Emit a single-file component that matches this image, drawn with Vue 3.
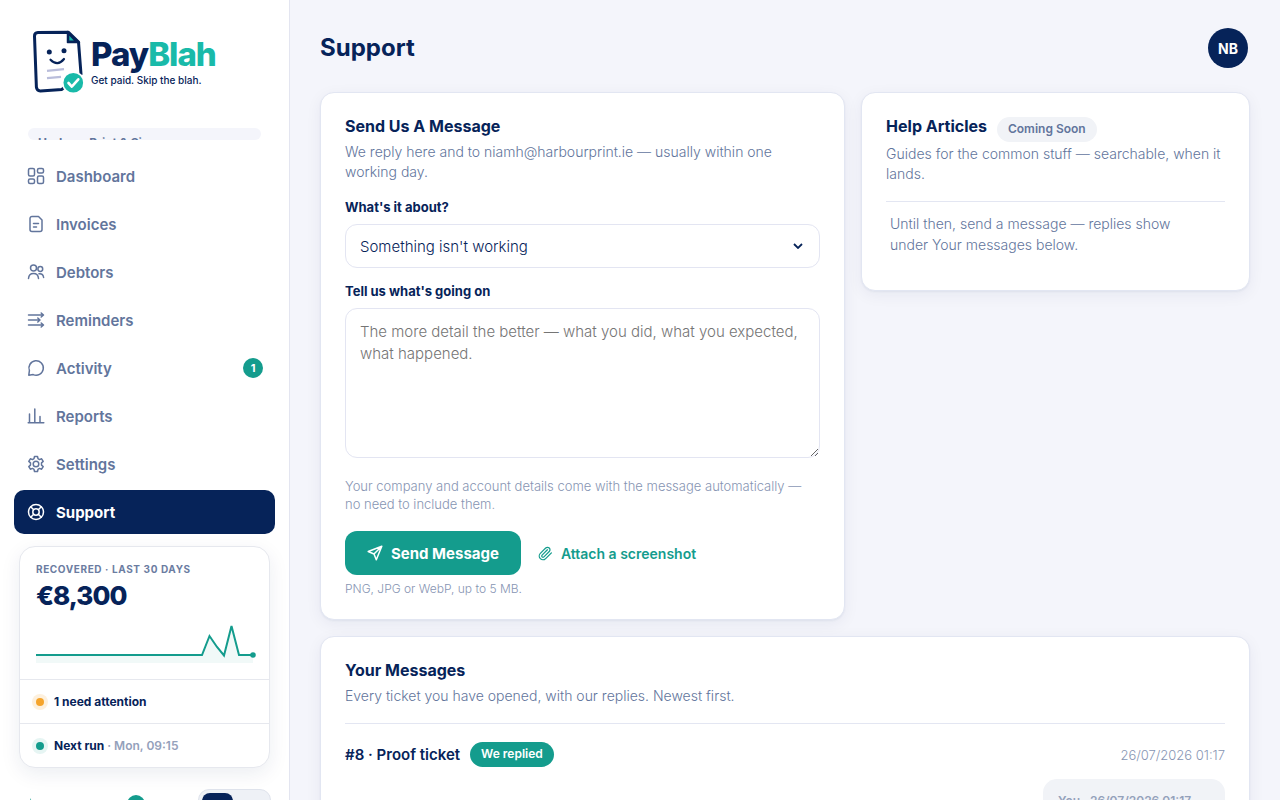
<script setup>
import { ref } from 'vue'

const nav = [
  { label: 'Dashboard', icon: 'dashboard' },
  { label: 'Invoices', icon: 'invoices' },
  { label: 'Debtors', icon: 'debtors' },
  { label: 'Reminders', icon: 'reminders' },
  { label: 'Activity', icon: 'activity', count: 1 },
  { label: 'Reports', icon: 'reports' },
  { label: 'Settings', icon: 'settings' },
  { label: 'Support', icon: 'support', active: true },
]

const icons = {
  dashboard:
    '<rect x="1.5" y="1.5" width="6" height="7.5" rx="1.5"/><rect x="10.5" y="1.5" width="6" height="4.5" rx="1.5"/><rect x="1.5" y="12" width="6" height="4.5" rx="1.5"/><rect x="10.5" y="9" width="6" height="7.5" rx="1.5"/>',
  invoices:
    '<path d="M5 1.5h6.500l3.500 3.500V14.500a2 2 0 0 1-2 2H5a2 2 0 0 1-2-2v-11a2 2 0 0 1 2-2z"/><path d="M6.500 8.500h5M6.500 12h3"/>',
  debtors:
    '<circle cx="6.500" cy="5" r="3"/><circle cx="13.300" cy="6" r="2.400"/><path d="M1.500 15.500c.2-3.200 2.200-5 5-5s4.800 1.800 5 5M12 10.800c2.600-.3 4.300 1.200 4.600 3.700"/>',
  reminders:
    '<path d="M1.500 4h14.500M1.500 9h11M1.500 14h14.500M14.200 2l2.300 2-2.300 2M10.800 7l2.200 2-2.200 2M14.200 12l2.300 2-2.300 2"/>',
  activity: '<path d="M1.800 16.200l.6-4.600A7.200 7.200 0 1 1 6.200 15.600z"/>',
  reports: '<path d="M1.200 15.800h15.600M2.500 15.500V7M7.800 15.500V2M13 15.500V9.500"/>',
  settings:
    '<circle cx="9" cy="9" r="2.800"/><path d="M7.500 1.500h3l.5 2.200 1.500.9 2.100-.8 1.600 2.600-1.700 1.500v2.200l1.700 1.500-1.600 2.600-2.100-.8-1.500.9-.5 2.200h-3L7 14.300l-1.500-.9-2.100.8-1.600-2.600 1.700-1.500V7.900L1.800 6.400l1.600-2.600 2.100.8L7 3.700z"/>',
  support:
    '<circle cx="9" cy="9" r="7.500"/><circle cx="9" cy="9" r="3.200"/><path d="M3.700 3.700l3 3M14.300 3.700l-3 3M3.700 14.300l3-3M14.300 14.300l-3-3"/>',
}

const topic = ref("Something isn't working")
const topics = ["Something isn't working", 'A billing question', 'An idea or request', 'Something else']
const message = ref('')
</script>

<template>
  <div class="shell">
    <aside class="sidebar">
      <a class="brand" href="#" aria-label="PayBlah home">
        <svg class="mark" width="56" height="66" viewBox="32 29 56 66" fill="none">
          <path d="M68.500 32.200 38 32.600q-3.600.2-3.500 3.600l1.900 51q.4 3.800 4 3.700l21.500-1.500L81 74l-2.500-32z" fill="#fff" stroke="#062359" stroke-width="3" stroke-linejoin="round" />
          <path d="M67.500 31.500v11h12z" fill="#062359" stroke="#062359" stroke-width="1.500" stroke-linejoin="round" />
          <path d="M69.300 35.800v4.700h4.500z" fill="#19baa9" />
          <circle cx="49.300" cy="52" r="2.500" fill="#062359" />
          <circle cx="64" cy="50.800" r="2.500" fill="#062359" />
          <path d="M50.500 59.700q7 7.200 13.500-.7" stroke="#062359" stroke-width="2.200" stroke-linecap="round" />
          <path d="m47 70.800 17-1.600M47 78.200l14-1.300" stroke="#b9bddb" stroke-width="2.200" />
          <circle cx="73.300" cy="82.700" r="11.500" fill="#fff" />
          <circle cx="73.300" cy="82.700" r="9.800" fill="#19baa9" />
          <path d="m68.500 83 3.300 3.600 6.500-7.300" stroke="#fff" stroke-width="2.600" stroke-linecap="round" stroke-linejoin="round" />
        </svg>
        <span class="words">
          <span class="name">Pay<span class="teal">Blah</span></span>
          <span class="tagline">Get paid. Skip the blah.</span>
        </span>
      </a>

      <div class="company">Harbour Print &amp; Signs</div>

      <nav class="nav" aria-label="Main">
        <a v-for="item in nav" :key="item.label" href="#" class="nav-item" :class="{ active: item.active }">
          <svg width="18" height="18" viewBox="0 0 18 18" class="line-icon" v-html="icons[item.icon]"></svg>
          <span class="nav-label">{{ item.label }}</span>
          <span v-if="item.count" class="count">{{ item.count }}</span>
        </a>
      </nav>

      <section class="pulse">
        <div class="pulse-top">
          <div class="eyebrow">RECOVERED · LAST 30 DAYS</div>
          <div class="amount">€8,300</div>
          <svg class="spark" viewBox="0 0 217 44" height="44">
            <path d="M0 35H166L173.500 16 181 27 188 35.500 195.500 6 203 35H217V43H0z" fill="#149c8d" fill-opacity=".06" />
            <path d="M0 35H166L173.500 16 181 27 188 35.500 195.500 6 203 35H217" fill="none" stroke="#149c8d" stroke-width="2" />
            <circle cx="217" cy="35" r="2.800" fill="#149c8d" />
          </svg>
        </div>
        <div class="pulse-row"><i class="dot amber"></i><b>1 need attention</b></div>
        <div class="pulse-row"><i class="dot green"></i><b>Next run</b><span class="when">· Mon, 09:15</span></div>
      </section>

      <div class="side-foot">
        <svg width="16" height="16" viewBox="0 0 16 16"><path d="M2.500 0 6 11H1z" fill="#149c8d" /></svg>
        <span class="foot-dot"></span>
        <span class="switch"><span class="knob"></span></span>
      </div>
    </aside>

    <main class="main">
      <header class="top">
        <h1>Support</h1>
        <button class="avatar" type="button" aria-label="Account">NB</button>
      </header>

      <div class="grid">
        <form class="card" @submit.prevent>
          <h2>Send Us A Message</h2>
          <p class="sub">We reply here and to niamh@harbourprint.ie — usually within one working day.</p>

          <label class="field-label" for="topic">What's it about?</label>
          <div class="select-wrap">
            <select id="topic" v-model="topic">
              <option v-for="t in topics" :key="t">{{ t }}</option>
            </select>
            <svg class="chevron" width="10" height="6" viewBox="0 0 10 6"><path d="M1 1l4 4 4-4" fill="none" stroke="#062359" stroke-width="1.800" /></svg>
          </div>

          <label class="field-label" for="details">Tell us what's going on</label>
          <textarea id="details" v-model="message" placeholder="The more detail the better — what you did, what you expected, what happened."></textarea>

          <p class="hint">Your company and account details come with the message automatically — no need to include them.</p>

          <div class="actions">
            <button class="send" type="submit">
              <svg width="16" height="16" viewBox="0 0 16 16" class="line-icon"><path d="M14.800 1.200 1.200 6.500l5.800 2.500 2.300 5.800zM14.800 1.200 7 9" /></svg>
              Send Message
            </button>
            <button class="attach" type="button">
              <svg width="15" height="15" viewBox="0 0 24 24" class="line-icon clip"><path d="m21.440 11.050-9.190 9.190a6 6 0 0 1-8.490-8.490l8.570-8.570A4 4 0 1 1 18 8.840l-8.590 8.570a2 2 0 0 1-2.830-2.830l8.490-8.480" /></svg>
              Attach a screenshot
            </button>
          </div>
          <p class="note">PNG, JPG or WebP, up to 5 MB.</p>
        </form>

        <section class="card">
          <div class="head-row"><h2>Help Articles</h2><span class="tag">Coming Soon</span></div>
          <p class="sub tight">Guides for the common stuff — searchable, when it lands.</p>
          <p class="until">Until then, send a message — replies show under Your messages below.</p>
        </section>

        <section class="card wide">
          <h2>Your Messages</h2>
          <p class="sub">Every ticket you have opened, with our replies. Newest first.</p>
          <article class="ticket">
            <div class="ticket-head">
              <h3>#8 · Proof ticket</h3>
              <span class="tag solid">We replied</span>
              <time>26/07/2026 01:17</time>
            </div>
            <div class="bubble">
              <div class="bubble-meta">You · 26/07/2026 01:17</div>
            </div>
          </article>
        </section>
      </div>
    </main>
  </div>
</template>

<style>
body {
  margin: 0;
  background: #f4f5fb;
}
</style>

<style scoped>
* {
  box-sizing: border-box;
}
.shell {
  display: flex;
  height: 100vh;
  overflow: hidden;
  font-family: Inter, 'Liberation Sans', sans-serif;
  font-size: 14px;
  font-weight: 300;
  color: #062359;
}
h1, h2, h3, p {
  margin: 0;
}
button, select, textarea {
  font-family: inherit;
  font-weight: inherit;
}
.line-icon {
  flex: none;
  fill: none;
  stroke: currentColor;
  stroke-width: 1.5;
  stroke-linecap: round;
  stroke-linejoin: round;
}

.sidebar {
  flex: none;
  width: 290px;
  display: flex;
  flex-direction: column;
  overflow: hidden;
  background: #fff;
  border-right: 1px solid #e3e5f0;
}
.brand {
  flex: none;
  display: flex;
  align-items: flex-start;
  gap: 3px;
  height: 128px;
  padding: 29px 32px 0;
  color: #062359;
  text-decoration: none;
}
.mark {
  flex: none;
}
.words {
  display: flex;
  flex-direction: column;
  padding-top: 6px;
}
.name {
  font-size: 33px;
  line-height: 38px;
  font-weight: 800;
  letter-spacing: -1px;
}
.teal {
  color: #19baa9;
}
.tagline {
  font-size: 10px;
  line-height: 14px;
  font-weight: 500;
  white-space: nowrap;
}
.company {
  flex: none;
  height: 12px;
  margin: 0 28px;
  padding: 7px 10px 0;
  overflow: hidden;
  border-radius: 8px;
  background: #f4f5fb;
  font-size: 12px;
  line-height: 16px;
  font-weight: 700;
  color: #62759c;
}
.nav {
  flex: none;
  display: flex;
  flex-direction: column;
  gap: 4px;
  padding: 14px 14px 12px;
}
.nav-item {
  display: flex;
  align-items: center;
  gap: 11px;
  height: 44px;
  padding: 0 12px 0 13px;
  border-radius: 10px;
  color: #62759c;
  font-size: 15px;
  font-weight: 600;
  text-decoration: none;
}
.nav-item.active {
  background: #062359;
  color: #fff;
  font-weight: 700;
}
.count {
  margin-left: auto;
  width: 20px;
  height: 20px;
  border-radius: 50%;
  background: #149c8d;
  color: #fff;
  font-size: 11px;
  line-height: 20px;
  font-weight: 700;
  text-align: center;
}

.pulse {
  flex: none;
  margin: 0 19px;
  border: 1px solid #e6e8ee;
  border-radius: 16px;
  background: #fff;
  box-shadow: 0 6px 20px rgba(6, 35, 89, 0.08);
}
.pulse-top {
  padding: 15px 16px;
}
.eyebrow {
  font-size: 10px;
  line-height: 14px;
  font-weight: 700;
  letter-spacing: 0.6px;
  color: #6b7ca1;
}
.amount {
  margin-top: 3px;
  font-size: 26px;
  line-height: 34px;
  font-weight: 800;
  letter-spacing: -1px;
}
.spark {
  display: block;
  width: 100%;
  margin-top: 7px;
  overflow: visible;
}
.pulse-row {
  display: flex;
  align-items: center;
  height: 44px;
  padding: 0 16px;
  border-top: 1px solid #e6e8ee;
  font-size: 12px;
  font-weight: 700;
}
.pulse-row b {
  font-weight: 700;
}
.dot {
  flex: none;
  width: 8px;
  height: 8px;
  margin-right: 10px;
  border-radius: 50%;
}
.amber {
  background: #f5a42c;
  box-shadow: 0 0 0 4px #fdf0dd;
}
.green {
  background: #149c8d;
  box-shadow: 0 0 0 4px #e6f5f3;
}
.when {
  margin-left: 3px;
  font-weight: 600;
  color: #94a1bb;
}
.side-foot {
  flex: none;
  display: flex;
  align-items: flex-start;
  margin-top: 21px;
  padding: 0 18px 0 28px;
}
.side-foot svg {
  margin-top: 9px;
}
.foot-dot {
  width: 18px;
  height: 18px;
  margin: 6px auto 0 83px;
  border-radius: 50%;
  background: #149c8d;
}
.switch {
  width: 73px;
  height: 36px;
  padding: 3px;
  border: 1px solid #dfe3ec;
  border-radius: 11px;
  background: #eef1f6;
}
.knob {
  display: block;
  width: 31px;
  height: 28px;
  border-radius: 8px;
  background: #062359;
}

.main {
  flex: 1;
  min-width: 0;
  padding: 28px 30px;
  overflow-y: auto;
  scrollbar-width: none;
  background: #f4f5fb;
}
.top {
  display: flex;
  align-items: center;
  justify-content: space-between;
  padding-right: 2px;
  margin-bottom: 24px;
}
h1 {
  font-size: 24px;
  line-height: 30px;
  font-weight: 700;
}
.avatar {
  width: 40px;
  height: 40px;
  padding: 0;
  border: 0;
  border-radius: 50%;
  background: #062359;
  color: #fff;
  font-size: 14px;
  font-weight: 700;
}
.grid {
  display: grid;
  grid-template-columns: 1.35fr 1fr;
  gap: 16px;
  align-items: start;
}
.card {
  padding: 24px;
  border: 1px solid #e2e6f2;
  border-radius: 14px;
  background: #fff;
  box-shadow: 0 1px 2px rgba(6, 35, 89, 0.05), 0 4px 16px rgba(6, 35, 89, 0.06);
}
.wide {
  grid-column: 1 / -1;
}
h2 {
  font-size: 16px;
  line-height: 19px;
  font-weight: 700;
}
.sub {
  margin: 6px 0 17px;
  font-size: 14px;
  line-height: 20px;
  color: #62759c;
}
.field-label {
  display: block;
  margin: 15px 0 9px;
  font-size: 13px;
  line-height: 16px;
  font-weight: 700;
}
.select-wrap {
  position: relative;
}
select {
  display: block;
  width: 100%;
  height: 44px;
  padding: 0 36px 0 14px;
  border: 1px solid #e3e5f2;
  border-radius: 12px;
  background: #fff;
  color: #062359;
  font-size: 15px;
  appearance: none;
}
.chevron {
  position: absolute;
  top: 19px;
  right: 17px;
  pointer-events: none;
}
textarea {
  display: block;
  width: 100%;
  height: 150px;
  padding: 12px 14px;
  border: 1px solid #e3e5f2;
  border-radius: 12px;
  background: #fff;
  color: #062359;
  font-size: 15px;
  line-height: 22px;
  resize: vertical;
}
.hint {
  margin-top: 19px;
  font-size: 13px;
  line-height: 18px;
  color: #8795b3;
}
.actions {
  display: flex;
  align-items: center;
  gap: 17px;
  margin-top: 18px;
}
.send, .attach {
  display: flex;
  align-items: center;
  border: 0;
  cursor: pointer;
}
.send {
  gap: 8px;
  height: 44px;
  padding: 0 22px;
  border-radius: 12px;
  background: #149c8d;
  color: #fff;
  font-size: 15px;
  font-weight: 700;
}
.attach {
  gap: 8px;
  padding: 0;
  background: none;
  color: #149c8d;
  font-size: 14px;
  font-weight: 600;
}
.clip {
  stroke-width: 2;
}
.note {
  margin-top: 7px;
  font-size: 12px;
  line-height: 13px;
  color: #8795b3;
}
.head-row {
  display: flex;
  align-items: flex-start;
  gap: 10px;
  height: 24px;
}
.tag {
  flex: none;
  height: 25px;
  padding: 0 11px;
  border-radius: 13px;
  background: #f1f3f7;
  color: #62759c;
  font-size: 12px;
  line-height: 24px;
  font-weight: 600;
}
.tag.solid {
  background: #149c8d;
  color: #fff;
}
.sub.tight {
  margin-top: 3px;
}
.until {
  margin-top: 17px;
  padding: 11px 20px 11px 4px;
  border-top: 1px solid #e3e6f2;
  font-size: 14px;
  line-height: 21px;
  color: #62759c;
}
.ticket {
  margin-top: 17px;
  padding-top: 18px;
  border-top: 1px solid #e3e6f2;
}
.ticket-head {
  display: flex;
  align-items: center;
  gap: 10px;
}
h3 {
  font-size: 15px;
  line-height: 20px;
  font-weight: 600;
}
time {
  margin-left: auto;
  font-size: 13px;
  color: #8795b3;
}
.bubble {
  width: 182px;
  margin: 12px 0 0 auto;
  padding: 14px 15px;
  border-radius: 14px;
  background: #f1f3f7;
}
.bubble-meta {
  font-size: 12px;
  line-height: 15px;
  font-weight: 600;
  color: #94a1bb;
}
</style>
